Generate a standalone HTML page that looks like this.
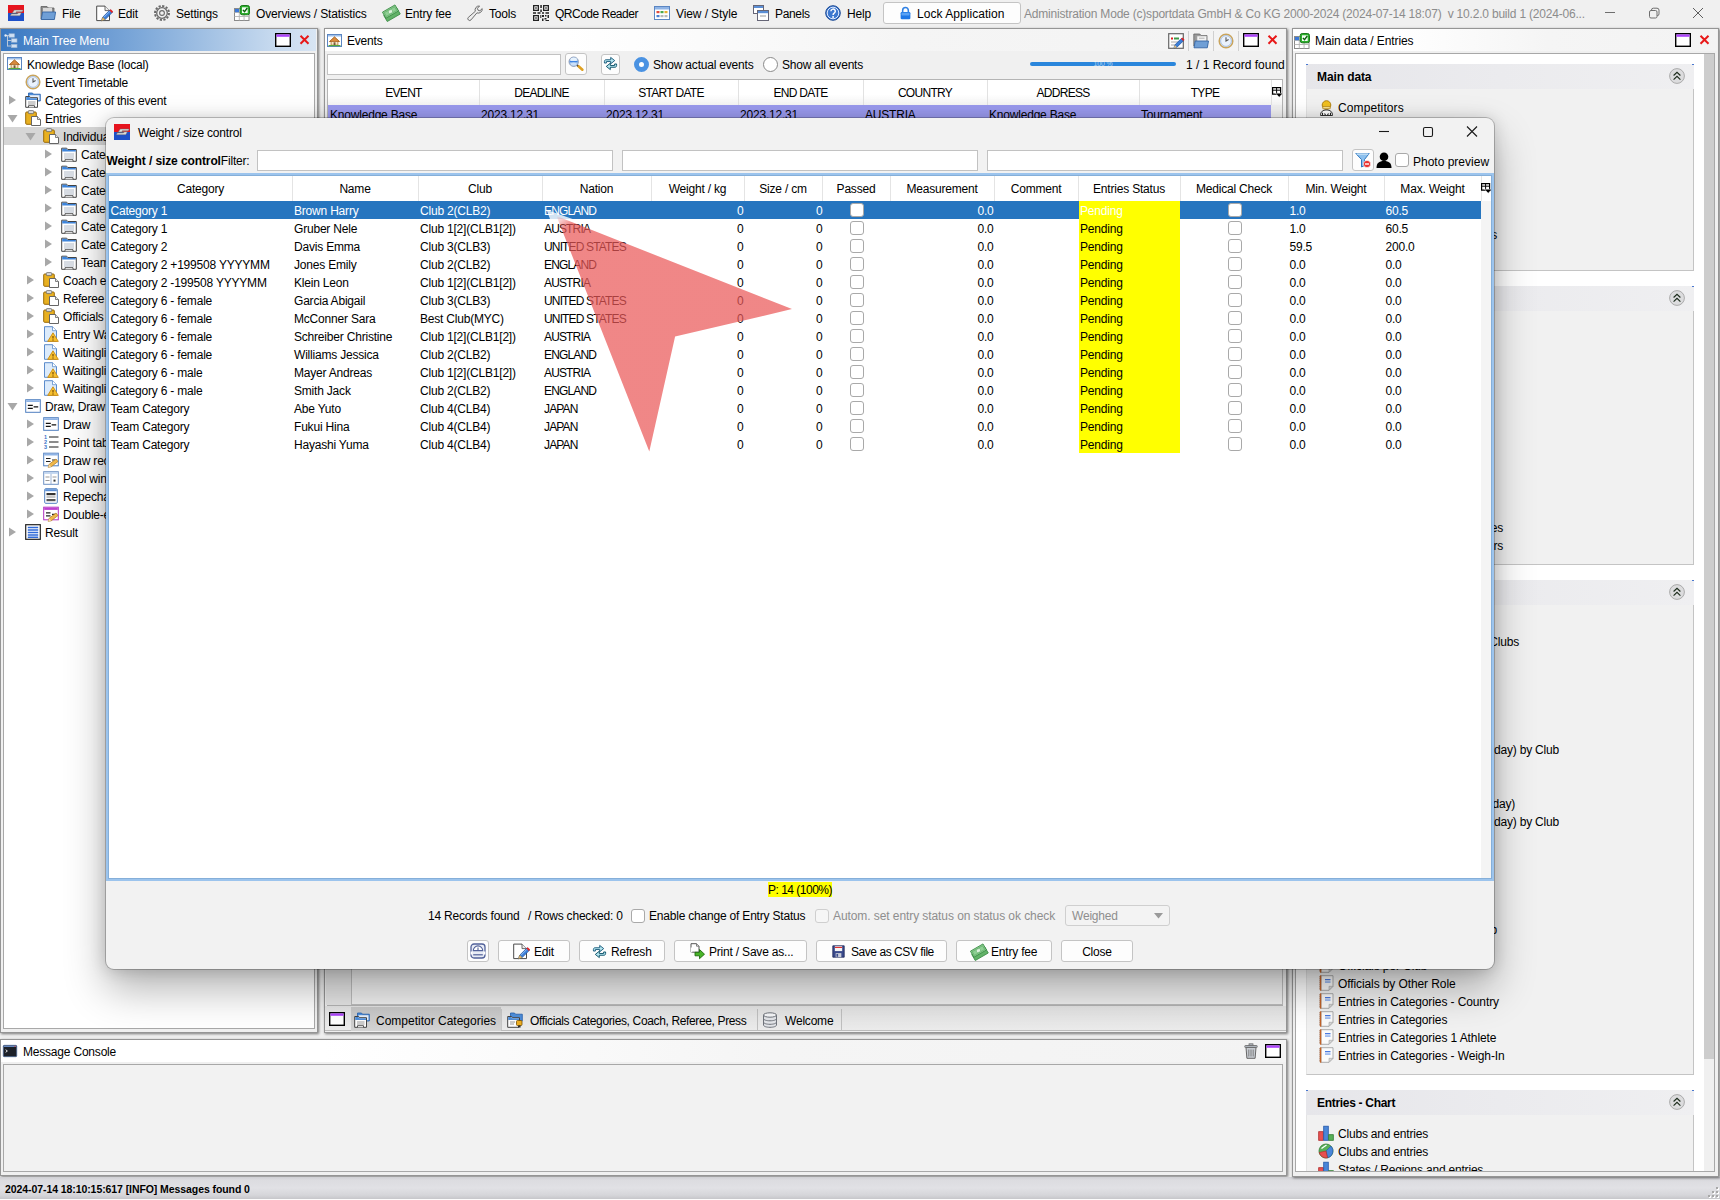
<!DOCTYPE html>
<html lang="en"><head><meta charset="utf-8"><title>Weight / size control</title>
<style>
*{box-sizing:border-box;margin:0;padding:0}
html,body{width:1720px;height:1200px;overflow:hidden;background:#f0f0f0}
body{font-family:"Liberation Sans",sans-serif;font-size:12px;letter-spacing:-0.2px;color:#000;position:relative}
.a{position:absolute}
.t{position:absolute;white-space:pre;line-height:18px;height:18px}
.b{font-weight:bold}
.c{text-align:center}
.r{text-align:right}
.w{color:#fff}
.g{color:#8a8a8a}
svg{position:absolute;overflow:visible}
.btn{position:absolute;height:22px;border:1px solid #c4c4c4;border-radius:3px;background:#fdfdfd}
.cb{position:absolute;width:14px;height:14px;border:1px solid #a9a9a9;border-radius:3px;background:#fff}
.inp{position:absolute;background:#fff;border:1px solid #c2c2c2}
.hd{position:absolute;top:0;height:25px;line-height:27px;text-align:center;border-right:1px solid #e4e4e4;white-space:pre}
.row{position:absolute;left:0;height:18px;line-height:18px;white-space:pre}
.row span{position:absolute;top:0;height:18px;line-height:20px}
</style></head>
<body>
<div class="a" style="left:0px;top:0px;width:1720px;height:28px;background:#f0f0f0"></div>
<svg style="left:8px;top:5px" width="16" height="16" viewBox="0 0 16 16" ><rect x="0" y="0" width="16" height="8" fill="#e6141e"/><rect x="0" y="8" width="16" height="8" fill="#1e50c8"/><path d="M6.200 5h9l-.9 1.800H8.300l-.4.9h5.500l-1.600 3H2.400l.9-1.800h6l.4-.9H4.300z" fill="#dcdcdc" stroke="#6a6a6a" stroke-width=".45"/><path d="M3 8.600h7.500" stroke="#9a6a3a" stroke-width=".5" opacity=".7"/></svg>
<svg style="left:40px;top:5px" width="16" height="16" viewBox="0 0 16 16" ><path d="M1 1.5h6l1.5 1.5H14v11H1z" fill="#8d8d8d" stroke="#5e5e5e" stroke-width=".8"/><path d="M3 3h9v9H3z" fill="#d8d8d8"/><path d="M2.6 7h13l-1.2 7.5H1.2z" fill="#6f9fd6" stroke="#3465a4" stroke-width=".9"/></svg>
<div class="t " style="left:62px;top:4.5px;">File</div>
<svg style="left:96px;top:5px" width="16" height="16" viewBox="0 0 16 16" ><path d="M.7 1.100h8.300l4.500 4.500v10H.7z" fill="#fff" stroke="#4a4a4a" stroke-width="1"/><path d="M9 1.100v4.500h4.500" fill="#ececec" stroke="#4a4a4a" stroke-width=".8"/><path d="M5.500 15.800l1.200-3.600 7.400-7.400 2.400 2.400-7.400 7.400z" fill="#3b7fd9" stroke="#1d4f9c" stroke-width=".7"/><path d="M13.400 5.500l1.300-1.300 2.400 2.400-1.300 1.300z" fill="#e62020"/><path d="M5.500 15.800l1.200-3.600 2.400 2.400z" fill="#f2c879" stroke="#a67a2a" stroke-width=".5"/><path d="M8 12.200l5.800-5.800" stroke="#9cc4f6" stroke-width=".9"/></svg>
<div class="t " style="left:118px;top:4.5px;">Edit</div>
<svg style="left:154px;top:5px" width="16" height="16" viewBox="0 0 16 16" ><g fill="none" stroke="#6a6a6a"><circle cx="8" cy="8" r="5.3" stroke-width="1.3"/><circle cx="8" cy="8" r="2.4" stroke-width="1.1"/><circle cx="8" cy="8" r="7" stroke-width="2" stroke-dasharray="2.2 1.46"/></g></svg>
<div class="t " style="left:176px;top:4.5px;">Settings</div>
<svg style="left:234px;top:5px" width="16" height="16" viewBox="0 0 16 16" ><rect x=".5" y="3.500" width="14.500" height="12" fill="#fff" stroke="#8a8a8a" stroke-width="1"/><path d="M.5 7.500h14.500M.5 11.500h14.500M5.300 3.500v12M10.100 7.500v8" stroke="#b4b4b4" stroke-width=".9"/><rect x="1" y="4" width="4" height="3.200" fill="#3c78d8"/><rect x="6.200" y=".5" width="9.300" height="9.300" rx="2" fill="#2cb02c" stroke="#0e6e0e" stroke-width=".9"/><rect x="8" y="2.300" width="5.700" height="5.700" fill="#f4fff4"/><path d="M8.900 4.900l1.600 1.800 2.800-3.700" fill="none" stroke="#0e5e0e" stroke-width="1.400"/></svg>
<div class="t " style="left:256px;top:4.5px;letter-spacing:-0.15px">Overviews / Statistics</div>
<svg style="left:383px;top:5px" width="16" height="16" viewBox="0 0 16 16" ><g transform="rotate(-30 8 8)"><rect x=".5" y="6.500" width="15" height="7" fill="#62b268" stroke="#3c8c46" stroke-width=".8"/><rect x="1" y="3" width="14.500" height="7" fill="#8fd094" stroke="#3c8c46" stroke-width=".8"/><rect x="2.300" y="4.300" width="11.900" height="4.400" fill="none" stroke="#5aa862" stroke-width=".6"/><ellipse cx="8.200" cy="6.500" rx="2.300" ry="1.800" fill="#dff3df" stroke="#5aa862" stroke-width=".5"/></g></svg>
<div class="t " style="left:405px;top:4.5px;">Entry fee</div>
<svg style="left:467px;top:5px" width="16" height="16" viewBox="0 0 16 16" ><path d="M15.200 3.600a4 4 0 0 1-5.300 4.300L4 14.900a1.800 1.800 0 0 1-2.700-2.500l7-6.100A4 4 0 0 1 12.600 1l-2.200 2.300.6 1.900 1.900.6z" fill="#ececec" stroke="#6e6e6e" stroke-width="1"/></svg>
<div class="t " style="left:489px;top:4.5px;">Tools</div>
<svg style="left:533px;top:5px" width="16" height="16" viewBox="0 0 16 16" ><g fill="#222"><path d="M0 0h6v6H0zM1.3 1.3v3.4h3.4V1.3zM10 0h6v6h-6zM11.3 1.3v3.4h3.4V1.3zM0 10h6v6H0zM1.3 11.3v3.4h3.4v-3.4z" fill-rule="evenodd"/><rect x="2.3" y="2.3" width="1.4" height="1.4"/><rect x="12.3" y="2.3" width="1.4" height="1.4"/><rect x="2.3" y="12.3" width="1.4" height="1.4"/><path d="M7.3 0h1.5v3H7.3zM7.3 4.5h1.5V7H7.3zM0 7.3h3v1.5H0zM4.5 7.3h3v1.5h-3zM9 7.3h2v1.5H9zM12.5 7.3H16v1.5h-3.5zM9 10h2v2H9zM12 10h1.5v1.5H12zM14.5 10H16v3h-1.5zM9 13.5h1.5V16H9zM11.5 13h2v1.5h-2zM12.5 15H16v1h-3.5zM7.3 10h1v3h-1z"/></g></svg>
<div class="t " style="left:555px;top:4.5px;letter-spacing:-0.5px">QRCode Reader</div>
<svg style="left:654px;top:5px" width="16" height="16" viewBox="0 0 16 16" ><rect x=".5" y="1.5" width="15" height="13" fill="#fff" stroke="#5b86c2" stroke-width="1"/><rect x="1" y="2" width="14" height="2.5" fill="#8fb4e6"/><rect x="2.5" y="6" width="3" height="2.2" fill="#e04a3a"/><rect x="6.5" y="6" width="3" height="2.2" fill="#4aa84a"/><rect x="10.5" y="6" width="3" height="2.2" fill="#e8b030"/><rect x="2.5" y="10" width="3" height="2.2" fill="#4a7fd0"/><rect x="6.5" y="10" width="3" height="2.2" fill="#b9b9b9"/><rect x="10.5" y="10" width="3" height="2.2" fill="#b9b9b9"/></svg>
<div class="t " style="left:676px;top:4.5px;letter-spacing:-0.1px">View / Style</div>
<svg style="left:753px;top:5px" width="16" height="16" viewBox="0 0 16 16" ><rect x=".5" y=".5" width="10" height="8" fill="#fff" stroke="#667" stroke-width="1"/><rect x="1" y="1" width="9" height="2" fill="#5b8fd6"/><rect x="4.5" y="5.5" width="11" height="10" fill="#fff" stroke="#667" stroke-width="1"/><rect x="5" y="6" width="10" height="2.2" fill="#5b8fd6"/><path d="M7 11h6" stroke="#999" stroke-width="1"/></svg>
<div class="t " style="left:775px;top:4.5px;letter-spacing:-0.35px">Panels</div>
<svg style="left:825px;top:5px" width="16" height="16" viewBox="0 0 16 16" ><circle cx="8" cy="8" r="7.3" fill="#3d78cf" stroke="#1d4a94" stroke-width="1"/><circle cx="8" cy="8" r="5.8" fill="none" stroke="#dfeaff" stroke-width="1"/><path d="M5.9 6.3a2.2 2.2 0 1 1 3.3 1.9c-.8.5-1.1.9-1.1 1.8" fill="none" stroke="#fff" stroke-width="1.5"/><circle cx="8.1" cy="12" r=".95" fill="#fff"/></svg>
<div class="t " style="left:847px;top:4.5px;">Help</div>
<div class="a" style="left:882.5px;top:2px;width:138.5px;height:22px;border:1px solid #c4c4c4;border-radius:3px;background:#fdfdfd"></div>
<svg style="left:898.5px;top:6px" width="13" height="14" viewBox="0 0 16 16" ><path d="M4.5 7V4.8a3.5 3.5 0 0 1 7 0V7" fill="none" stroke="#2f80e4" stroke-width="1.9"/><rect x="2" y="6.8" width="12" height="9" rx="1.6" fill="#1f78e6"/><rect x="3" y="7.8" width="10" height="3.2" rx="1" fill="#5aa2f4"/></svg>
<div class="t " style="left:917px;top:4.5px;letter-spacing:0.05px">Lock Application</div>
<div class="t g" style="left:1024px;top:4.5px;color:#8c8c8c">Administration Mode (c)sportdata GmbH &amp; Co KG 2000-2024 (2024-07-14 18:07)  v 10.2.0 build 1 (2024-06...</div>
<svg style="left:1600px;top:4px" width="120" height="20" viewBox="0 0 120 20"><g fill="none" stroke="#6e6e6e" stroke-width="1"><path d="M5 8.500h10"/><rect x="49.500" y="6.500" width="7.500" height="7.500" rx="1.500"/><path d="M51.500 6.500v-.500a1.800 1.800 0 0 1 1.800-1.800h3.700a2 2 0 0 1 2 2v3.700a1.800 1.800 0 0 1-1.800 1.800h-.2"/><path d="M93 4l10 10M103 4l-10 10" stroke="#5e5e5e" stroke-width="1"/></g></svg>
<div class="a" style="left:0px;top:28px;width:318px;height:1005px;border:1px solid #959595;box-shadow:1px 1px 2.5px rgba(0,0,0,.5);background:#f0f0f0"></div>
<div class="a" style="left:1px;top:29px;width:315px;height:22px;background:linear-gradient(90deg,#3878c2 0%,#5a8ecc 20%,#7aa6d8 42%,#9cbde2 62%,#c4d8ee 85%,#d8e5f3 100%)"></div>
<svg style="left:4px;top:33px" width="16" height="16" viewBox="0 0 16 16" ><path d="M3.5 3v10.5M3.5 7.5H8M3.5 13H8M1 2.5h5" stroke="#b9c7d8" stroke-width="1" fill="none"/><rect x="5" y=".8" width="5.5" height="3.4" fill="#cfe0f4" stroke="#9db4d0" stroke-width=".6"/><rect x="7.5" y="5.8" width="5.5" height="3.4" fill="#cfe0f4" stroke="#9db4d0" stroke-width=".6"/><rect x="7.5" y="11.3" width="5.5" height="3.4" fill="#cfe0f4" stroke="#9db4d0" stroke-width=".6"/><circle cx="1.6" cy="2.5" r="1.2" fill="#e8eef6"/></svg>
<div class="t w" style="left:23px;top:32px;letter-spacing:-0.05px">Main Tree Menu</div>
<svg style="left:275px;top:33px" width="16" height="16" viewBox="0 0 16 16" ><rect x=".7" y=".7" width="14.600" height="12.600" fill="#fff" stroke="#000" stroke-width="1.400"/><rect x="1.400" y="1.400" width="13.200" height="2.400" fill="#ac44fa"/></svg>
<svg style="left:297px;top:33px" width="16" height="16" viewBox="0 0 16 16" ><path d="M3.500 2.700l8 8M11.500 2.700l-8 8" stroke="#e81818" stroke-width="2" fill="none"/></svg>
<div class="a" style="left:3px;top:53px;width:312px;height:976px;border:1px solid #a8a8a8;background:#fff"></div>
<svg style="left:7px;top:56px" width="16" height="16" viewBox="0 0 16 16" ><rect x=".5" y="1.500" width="14" height="12" fill="#fff" stroke="#5b86c2" stroke-width="1"/><rect x="1" y="2" width="13" height="1.500" fill="#9fc0ea"/><path d="M7.500 4L2.600 8.500h1.500v3.700h6.800V8.500h1.500z" fill="#f6e7c8" stroke="#b0762a" stroke-width=".8"/><path d="M7.500 4L2.600 8.500h9.800z" fill="#d98a3c" stroke="#a35a18" stroke-width=".7"/><rect x="6.600" y="9.300" width="1.900" height="2.900" fill="#7a5a3a"/><path d="M1.500 12.600h12" stroke="#58a83c" stroke-width="1.200"/></svg>
<div class="t " style="left:27px;top:56px;">Knowledge Base (local)</div>
<svg style="left:25px;top:74px" width="16" height="16" viewBox="0 0 16 16" ><circle cx="8" cy="8" r="6.8" fill="#f2f7ff" stroke="#c9a45c" stroke-width="1.5"/><circle cx="8" cy="8" r="5.4" fill="#eaf2fd" stroke="#9fb9dd" stroke-width=".9"/><path d="M8 4.2V8l2.6-1.4" stroke="#555" stroke-width="1.1" fill="none"/></svg>
<div class="t " style="left:45px;top:74px;">Event Timetable</div>
<svg style="left:8px;top:95px" width="9" height="10" viewBox="0 0 9 10"><path d="M1 .500l7 4.500-7 4.500z" fill="#a8a8a8"/></svg>
<svg style="left:25px;top:92px" width="16" height="16" viewBox="0 0 16 16" ><path d="M3.5 1h4l1 1.2h6.8V9H3.5z" fill="#4f8fdc" stroke="#2460ad" stroke-width=".8"/><rect x="4.5" y="3.2" width="10" height="5" fill="#e9f1fb"/><path d="M.7 4.5h4l1 1.2h6.8v9.6H.7z" fill="#fff" stroke="#444" stroke-width="1"/><path d="M1.2 5h3.2l1 1.2h6.6V8H1.2z" fill="#4f8fdc"/><path d="M3 10h7.5M3 12h7.5" stroke="#9a9a9a" stroke-width="1"/><path d="M3.5 15.3v-1.6h6v1.6" fill="#fff" stroke="#444" stroke-width=".9"/></svg>
<div class="t " style="left:45px;top:92px;">Categories of this event</div>
<svg style="left:7px;top:114px" width="11" height="9" viewBox="0 0 11 9"><path d="M.500 1h10l-5 7.500z" fill="#a8a8a8"/></svg>
<svg style="left:25px;top:110px" width="16" height="16" viewBox="0 0 16 16" ><rect x=".7" y="2" width="10.6" height="12.3" rx="1" fill="#e8b020" stroke="#9a6a08" stroke-width="1"/><rect x="3.3" y=".6" width="5.4" height="3" rx=".8" fill="#d9d9d9" stroke="#6a6a6a" stroke-width=".8"/><path d="M6.5 6.5h6l3 3v6h-9z" fill="#fff" stroke="#666" stroke-width="1"/><path d="M12.5 6.5v3h3" fill="#e6e6e6" stroke="#666" stroke-width=".8"/></svg>
<div class="t " style="left:45px;top:110px;">Entries</div>
<div class="a" style="left:4px;top:127px;width:310px;height:18px;background:#d6d6d6"></div>
<svg style="left:25px;top:132px" width="11" height="9" viewBox="0 0 11 9"><path d="M.500 1h10l-5 7.500z" fill="#a8a8a8"/></svg>
<svg style="left:43px;top:128px" width="16" height="16" viewBox="0 0 16 16" ><rect x=".7" y="2" width="10.6" height="12.3" rx="1" fill="#e8b020" stroke="#9a6a08" stroke-width="1"/><rect x="3.3" y=".6" width="5.4" height="3" rx=".8" fill="#d9d9d9" stroke="#6a6a6a" stroke-width=".8"/><path d="M6.5 6.5h6l3 3v6h-9z" fill="#fff" stroke="#666" stroke-width="1"/><path d="M12.5 6.5v3h3" fill="#e6e6e6" stroke="#666" stroke-width=".8"/></svg>
<div class="t " style="left:63px;top:128px;">Individual entries</div>
<svg style="left:44px;top:149px" width="9" height="10" viewBox="0 0 9 10"><path d="M1 .500l7 4.500-7 4.500z" fill="#a8a8a8"/></svg>
<svg style="left:61px;top:146px" width="16" height="16" viewBox="0 0 16 16" ><path d="M.7 2.200h5l1 1.300h8.600v11.800H.7z" fill="#fff" stroke="#444" stroke-width="1"/><path d="M1.200 2.700h4.200l1 1.300h8.400v1.500H1.200z" fill="#3f86dc"/><path d="M3 8h10M3 10h10M3 12h10" stroke="#a9b4c4" stroke-width=".9"/><path d="M4 15.300v-1.600h8v1.600" fill="#fff" stroke="#444" stroke-width=".9"/></svg>
<div class="t " style="left:81px;top:146px;">Category 1</div>
<svg style="left:44px;top:167px" width="9" height="10" viewBox="0 0 9 10"><path d="M1 .500l7 4.500-7 4.500z" fill="#a8a8a8"/></svg>
<svg style="left:61px;top:164px" width="16" height="16" viewBox="0 0 16 16" ><path d="M.7 2.200h5l1 1.300h8.600v11.800H.7z" fill="#fff" stroke="#444" stroke-width="1"/><path d="M1.200 2.700h4.200l1 1.300h8.400v1.500H1.200z" fill="#3f86dc"/><path d="M3 8h10M3 10h10M3 12h10" stroke="#a9b4c4" stroke-width=".9"/><path d="M4 15.300v-1.600h8v1.600" fill="#fff" stroke="#444" stroke-width=".9"/></svg>
<div class="t " style="left:81px;top:164px;">Category 2</div>
<svg style="left:44px;top:185px" width="9" height="10" viewBox="0 0 9 10"><path d="M1 .500l7 4.500-7 4.500z" fill="#a8a8a8"/></svg>
<svg style="left:61px;top:182px" width="16" height="16" viewBox="0 0 16 16" ><path d="M.7 2.200h5l1 1.300h8.600v11.800H.7z" fill="#fff" stroke="#444" stroke-width="1"/><path d="M1.200 2.700h4.200l1 1.300h8.400v1.500H1.200z" fill="#3f86dc"/><path d="M3 8h10M3 10h10M3 12h10" stroke="#a9b4c4" stroke-width=".9"/><path d="M4 15.300v-1.600h8v1.600" fill="#fff" stroke="#444" stroke-width=".9"/></svg>
<div class="t " style="left:81px;top:182px;">Category 2 +199508</div>
<svg style="left:44px;top:203px" width="9" height="10" viewBox="0 0 9 10"><path d="M1 .500l7 4.500-7 4.500z" fill="#a8a8a8"/></svg>
<svg style="left:61px;top:200px" width="16" height="16" viewBox="0 0 16 16" ><path d="M.7 2.200h5l1 1.300h8.600v11.800H.7z" fill="#fff" stroke="#444" stroke-width="1"/><path d="M1.200 2.700h4.200l1 1.300h8.400v1.500H1.200z" fill="#3f86dc"/><path d="M3 8h10M3 10h10M3 12h10" stroke="#a9b4c4" stroke-width=".9"/><path d="M4 15.300v-1.600h8v1.600" fill="#fff" stroke="#444" stroke-width=".9"/></svg>
<div class="t " style="left:81px;top:200px;">Category 2 -199508</div>
<svg style="left:44px;top:221px" width="9" height="10" viewBox="0 0 9 10"><path d="M1 .500l7 4.500-7 4.500z" fill="#a8a8a8"/></svg>
<svg style="left:61px;top:218px" width="16" height="16" viewBox="0 0 16 16" ><path d="M.7 2.200h5l1 1.300h8.600v11.800H.7z" fill="#fff" stroke="#444" stroke-width="1"/><path d="M1.200 2.700h4.200l1 1.300h8.400v1.500H1.200z" fill="#3f86dc"/><path d="M3 8h10M3 10h10M3 12h10" stroke="#a9b4c4" stroke-width=".9"/><path d="M4 15.300v-1.600h8v1.600" fill="#fff" stroke="#444" stroke-width=".9"/></svg>
<div class="t " style="left:81px;top:218px;">Category 6 - female</div>
<svg style="left:44px;top:239px" width="9" height="10" viewBox="0 0 9 10"><path d="M1 .500l7 4.500-7 4.500z" fill="#a8a8a8"/></svg>
<svg style="left:61px;top:236px" width="16" height="16" viewBox="0 0 16 16" ><path d="M.7 2.200h5l1 1.300h8.600v11.800H.7z" fill="#fff" stroke="#444" stroke-width="1"/><path d="M1.200 2.700h4.200l1 1.300h8.400v1.500H1.200z" fill="#3f86dc"/><path d="M3 8h10M3 10h10M3 12h10" stroke="#a9b4c4" stroke-width=".9"/><path d="M4 15.300v-1.600h8v1.600" fill="#fff" stroke="#444" stroke-width=".9"/></svg>
<div class="t " style="left:81px;top:236px;">Category 6 - male</div>
<svg style="left:44px;top:257px" width="9" height="10" viewBox="0 0 9 10"><path d="M1 .500l7 4.500-7 4.500z" fill="#a8a8a8"/></svg>
<svg style="left:61px;top:254px" width="16" height="16" viewBox="0 0 16 16" ><path d="M.7 2.200h5l1 1.300h8.600v11.800H.7z" fill="#fff" stroke="#444" stroke-width="1"/><path d="M1.200 2.700h4.200l1 1.300h8.400v1.500H1.200z" fill="#3f86dc"/><path d="M3 8h10M3 10h10M3 12h10" stroke="#a9b4c4" stroke-width=".9"/><path d="M4 15.300v-1.600h8v1.600" fill="#fff" stroke="#444" stroke-width=".9"/></svg>
<div class="t " style="left:81px;top:254px;">Team Category</div>
<svg style="left:26px;top:275px" width="9" height="10" viewBox="0 0 9 10"><path d="M1 .500l7 4.500-7 4.500z" fill="#a8a8a8"/></svg>
<svg style="left:43px;top:272px" width="16" height="16" viewBox="0 0 16 16" ><rect x=".7" y="2" width="10.6" height="12.3" rx="1" fill="#e8b020" stroke="#9a6a08" stroke-width="1"/><rect x="3.3" y=".6" width="5.4" height="3" rx=".8" fill="#d9d9d9" stroke="#6a6a6a" stroke-width=".8"/><path d="M6.5 6.5h6l3 3v6h-9z" fill="#fff" stroke="#666" stroke-width="1"/><path d="M12.5 6.5v3h3" fill="#e6e6e6" stroke="#666" stroke-width=".8"/></svg>
<div class="t " style="left:63px;top:272px;">Coach entries</div>
<svg style="left:26px;top:293px" width="9" height="10" viewBox="0 0 9 10"><path d="M1 .500l7 4.500-7 4.500z" fill="#a8a8a8"/></svg>
<svg style="left:43px;top:290px" width="16" height="16" viewBox="0 0 16 16" ><rect x=".7" y="2" width="10.6" height="12.3" rx="1" fill="#e8b020" stroke="#9a6a08" stroke-width="1"/><rect x="3.3" y=".6" width="5.4" height="3" rx=".8" fill="#d9d9d9" stroke="#6a6a6a" stroke-width=".8"/><path d="M6.5 6.5h6l3 3v6h-9z" fill="#fff" stroke="#666" stroke-width="1"/><path d="M12.5 6.5v3h3" fill="#e6e6e6" stroke="#666" stroke-width=".8"/></svg>
<div class="t " style="left:63px;top:290px;">Referee entries</div>
<svg style="left:26px;top:311px" width="9" height="10" viewBox="0 0 9 10"><path d="M1 .500l7 4.500-7 4.500z" fill="#a8a8a8"/></svg>
<svg style="left:43px;top:308px" width="16" height="16" viewBox="0 0 16 16" ><rect x=".7" y="2" width="10.6" height="12.3" rx="1" fill="#e8b020" stroke="#9a6a08" stroke-width="1"/><rect x="3.3" y=".6" width="5.4" height="3" rx=".8" fill="#d9d9d9" stroke="#6a6a6a" stroke-width=".8"/><path d="M6.5 6.5h6l3 3v6h-9z" fill="#fff" stroke="#666" stroke-width="1"/><path d="M12.5 6.5v3h3" fill="#e6e6e6" stroke="#666" stroke-width=".8"/></svg>
<div class="t " style="left:63px;top:308px;">Officials entries</div>
<svg style="left:26px;top:329px" width="9" height="10" viewBox="0 0 9 10"><path d="M1 .500l7 4.500-7 4.500z" fill="#a8a8a8"/></svg>
<svg style="left:43px;top:326px" width="16" height="16" viewBox="0 0 16 16" ><path d="M1.5.7h8l4 4v10.6h-12z" fill="#dcebfb" stroke="#5b8ccc" stroke-width="1"/><path d="M9.5.7v4h4" fill="#fff" stroke="#5b8ccc" stroke-width=".8"/><path d="M10 6.8l5.3 8.6H4.7z" fill="#f6c030" stroke="#c98a10" stroke-width=".9"/><path d="M10 10v2.6" stroke="#7a4a00" stroke-width="1.2"/><circle cx="10" cy="14" r=".7" fill="#7a4a00"/></svg>
<div class="t " style="left:63px;top:326px;">Entry Warnings</div>
<svg style="left:26px;top:347px" width="9" height="10" viewBox="0 0 9 10"><path d="M1 .500l7 4.500-7 4.500z" fill="#a8a8a8"/></svg>
<svg style="left:43px;top:344px" width="16" height="16" viewBox="0 0 16 16" ><path d="M1.5.7h8l4 4v10.6h-12z" fill="#dcebfb" stroke="#5b8ccc" stroke-width="1"/><path d="M9.5.7v4h4" fill="#fff" stroke="#5b8ccc" stroke-width=".8"/><path d="M10 6.8l5.3 8.6H4.7z" fill="#f6c030" stroke="#c98a10" stroke-width=".9"/><path d="M10 10v2.6" stroke="#7a4a00" stroke-width="1.2"/><circle cx="10" cy="14" r=".7" fill="#7a4a00"/></svg>
<div class="t " style="left:63px;top:344px;">Waitinglist</div>
<svg style="left:26px;top:365px" width="9" height="10" viewBox="0 0 9 10"><path d="M1 .500l7 4.500-7 4.500z" fill="#a8a8a8"/></svg>
<svg style="left:43px;top:362px" width="16" height="16" viewBox="0 0 16 16" ><path d="M1.5.7h8l4 4v10.6h-12z" fill="#dcebfb" stroke="#5b8ccc" stroke-width="1"/><path d="M9.5.7v4h4" fill="#fff" stroke="#5b8ccc" stroke-width=".8"/><path d="M10 6.8l5.3 8.6H4.7z" fill="#f6c030" stroke="#c98a10" stroke-width=".9"/><path d="M10 10v2.6" stroke="#7a4a00" stroke-width="1.2"/><circle cx="10" cy="14" r=".7" fill="#7a4a00"/></svg>
<div class="t " style="left:63px;top:362px;">Waitinglist Coach</div>
<svg style="left:26px;top:383px" width="9" height="10" viewBox="0 0 9 10"><path d="M1 .500l7 4.500-7 4.500z" fill="#a8a8a8"/></svg>
<svg style="left:43px;top:380px" width="16" height="16" viewBox="0 0 16 16" ><path d="M1.5.7h8l4 4v10.6h-12z" fill="#dcebfb" stroke="#5b8ccc" stroke-width="1"/><path d="M9.5.7v4h4" fill="#fff" stroke="#5b8ccc" stroke-width=".8"/><path d="M10 6.8l5.3 8.6H4.7z" fill="#f6c030" stroke="#c98a10" stroke-width=".9"/><path d="M10 10v2.6" stroke="#7a4a00" stroke-width="1.2"/><circle cx="10" cy="14" r=".7" fill="#7a4a00"/></svg>
<div class="t " style="left:63px;top:380px;">Waitinglist Referee</div>
<svg style="left:7px;top:402px" width="11" height="9" viewBox="0 0 11 9"><path d="M.500 1h10l-5 7.500z" fill="#a8a8a8"/></svg>
<svg style="left:25px;top:398px" width="16" height="16" viewBox="0 0 16 16" ><rect x=".7" y="1.7" width="14.6" height="12.6" fill="#fff" stroke="#4f7fc0" stroke-width="1"/><rect x="1.2" y="2.2" width="13.6" height="1.8" fill="#8fb4e6"/><path d="M2.800 7.300h5M2.800 10.300h5M8.600 8.800h4.600" stroke="#111" stroke-width="1.150"/></svg>
<div class="t " style="left:45px;top:398px;">Draw, Draw records</div>
<svg style="left:26px;top:419px" width="9" height="10" viewBox="0 0 9 10"><path d="M1 .500l7 4.500-7 4.500z" fill="#a8a8a8"/></svg>
<svg style="left:43px;top:416px" width="16" height="16" viewBox="0 0 16 16" ><rect x=".7" y="1.7" width="14.6" height="12.6" fill="#fff" stroke="#4f7fc0" stroke-width="1"/><rect x="1.2" y="2.2" width="13.6" height="1.8" fill="#8fb4e6"/><path d="M2.800 7.300h5M2.800 10.300h5M8.600 8.800h4.600" stroke="#111" stroke-width="1.150"/></svg>
<div class="t " style="left:63px;top:416px;">Draw</div>
<svg style="left:26px;top:437px" width="9" height="10" viewBox="0 0 9 10"><path d="M1 .500l7 4.500-7 4.500z" fill="#a8a8a8"/></svg>
<svg style="left:43px;top:434px" width="16" height="16" viewBox="0 0 16 16" ><path d="M6 3h9.500M6 8h9.500M6 13h9.500" stroke="#1a1a1a" stroke-width="1.050"/><g fill="#3b74c8" font-family="Liberation Sans,sans-serif" font-size="5.5" font-weight="bold"><text x="1" y="4.8">1</text><text x="1" y="9.8">2</text><text x="1" y="14.8">3</text></g></svg>
<div class="t " style="left:63px;top:434px;">Point tables</div>
<svg style="left:26px;top:455px" width="9" height="10" viewBox="0 0 9 10"><path d="M1 .500l7 4.500-7 4.500z" fill="#a8a8a8"/></svg>
<svg style="left:43px;top:452px" width="16" height="16" viewBox="0 0 16 16" ><rect x=".7" y="1.2" width="14.6" height="12.6" fill="#fff" stroke="#4f7fc0" stroke-width="1"/><rect x="1.2" y="1.7" width="13.6" height="1.8" fill="#8fb4e6"/><path d="M3 6.5h4.5M3 9.5h4.5M9 8h3" stroke="#222" stroke-width="1.2"/><path d="M5.2 15.3l1-3 6.8-5.3 2 2.5-6.8 5.3z" fill="#f0b84a" stroke="#a8741c" stroke-width=".7"/><path d="M5.2 15.3l1-3 1.9 2.4z" fill="#f6dcae"/></svg>
<div class="t " style="left:63px;top:452px;">Draw records</div>
<svg style="left:26px;top:473px" width="9" height="10" viewBox="0 0 9 10"><path d="M1 .500l7 4.500-7 4.500z" fill="#a8a8a8"/></svg>
<svg style="left:43px;top:470px" width="16" height="16" viewBox="0 0 16 16" ><rect x=".7" y="1.7" width="14.6" height="12.6" fill="#fff" stroke="#6f92c4" stroke-width="1"/><rect x="1.2" y="2.2" width="13.6" height="1.6" fill="#b9d0ee"/><path d="M8 3.8v10.4" stroke="#9fb4d4" stroke-width="1"/><path d="M2.5 7h4M2.5 10.5h4M9.5 7h4" stroke="#9a9a9a" stroke-width="1.2"/><rect x="10.5" y="9.6" width="2" height="2" fill="#333"/></svg>
<div class="t " style="left:63px;top:470px;">Pool winner</div>
<svg style="left:26px;top:491px" width="9" height="10" viewBox="0 0 9 10"><path d="M1 .500l7 4.500-7 4.500z" fill="#a8a8a8"/></svg>
<svg style="left:43px;top:488px" width="16" height="16" viewBox="0 0 16 16" ><rect x="1.7" y=".7" width="12.6" height="14.6" rx="1" fill="#fff" stroke="#4f7fc0" stroke-width="1"/><rect x="2.2" y="1.2" width="11.6" height="2" fill="#5b8fd6"/><rect x="3.5" y="5" width="9" height="2.2" fill="#333"/><rect x="3.5" y="8.2" width="9" height="1.6" fill="#b9b9b9"/><rect x="3.5" y="11" width="9" height="2.2" fill="#555"/></svg>
<div class="t " style="left:63px;top:488px;">Repechage</div>
<svg style="left:26px;top:509px" width="9" height="10" viewBox="0 0 9 10"><path d="M1 .500l7 4.500-7 4.500z" fill="#a8a8a8"/></svg>
<svg style="left:43px;top:506px" width="16" height="16" viewBox="0 0 16 16" ><rect x=".7" y="1.2" width="14.6" height="12.6" fill="#fff" stroke="#b030c0" stroke-width="1"/><rect x="1.2" y="1.7" width="13.6" height="2.2" fill="#c040d0"/><path d="M3 6.8h4.5M3 9.8h4.5M9 8.3h3" stroke="#222" stroke-width="1.2"/><path d="M5.2 15.3l1-3 6.8-5.3 2 2.5-6.8 5.3z" fill="#f0b84a" stroke="#a8741c" stroke-width=".7"/><path d="M5.2 15.3l1-3 1.9 2.4z" fill="#f6dcae"/></svg>
<div class="t " style="left:63px;top:506px;">Double-elimination</div>
<svg style="left:8px;top:527px" width="9" height="10" viewBox="0 0 9 10"><path d="M1 .500l7 4.500-7 4.500z" fill="#a8a8a8"/></svg>
<svg style="left:25px;top:524px" width="16" height="16" viewBox="0 0 16 16" ><rect x=".7" y=".7" width="14.6" height="14.6" fill="#fff" stroke="#222" stroke-width="1.2"/><path d="M2.8 3.5h10.4M2.8 6h10.4M2.8 8.5h10.4M2.8 11h10.4M2.8 13.2h10.4" stroke="#2f6ad8" stroke-width="1.5"/></svg>
<div class="t " style="left:45px;top:524px;">Result</div>
<div class="a" style="left:324px;top:28px;width:963px;height:1005px;border:1px solid #959595;box-shadow:1px 1px 2.5px rgba(0,0,0,.5);background:#f0f0f0"></div>
<div class="a" style="left:325px;top:29px;width:960px;height:22px;background:linear-gradient(90deg,#fff 0%,#fff 25%,#f5f5f5 60%,#f3f3f3 100%)"></div>
<svg style="left:327px;top:33px" width="16" height="16" viewBox="0 0 16 16" ><rect x=".5" y="1.500" width="14" height="12" fill="#fff" stroke="#5b86c2" stroke-width="1"/><rect x="1" y="2" width="13" height="1.500" fill="#9fc0ea"/><path d="M7.500 4L2.600 8.500h1.500v3.700h6.800V8.500h1.500z" fill="#f6e7c8" stroke="#b0762a" stroke-width=".8"/><path d="M7.500 4L2.600 8.500h9.800z" fill="#d98a3c" stroke="#a35a18" stroke-width=".7"/><rect x="6.600" y="9.300" width="1.900" height="2.900" fill="#7a5a3a"/><path d="M1.500 12.600h12" stroke="#58a83c" stroke-width="1.200"/></svg>
<div class="t " style="left:347px;top:32px;">Events</div>
<svg style="left:1168px;top:33px" width="16" height="16" viewBox="0 0 16 16" ><rect x=".7" y=".7" width="14.6" height="14.6" fill="#fff" stroke="#666" stroke-width="1.2"/><rect x="3" y="4.5" width="2" height="2" fill="#e02020"/><rect x="6" y="4.5" width="5" height="2" fill="#3f9a4a"/><path d="M3 9h8M3 12h5" stroke="#aaa" stroke-width="1.2"/><path d="M6 15l.8-3 6.500-6.500 2.200 2.200L9 14.200z" fill="#3b7fd9" stroke="#1d4f9c" stroke-width=".7"/><path d="M13 5.800l1.300-1.300 2.200 2.200-1.300 1.300z" fill="#e02020"/><path d="M6 15l.8-3 2.200 2.200z" fill="#f2c879"/></svg>
<svg style="left:1193px;top:33px" width="16" height="16" viewBox="0 0 16 16" ><path d="M.8 1h6l1.200 1.500h6V13H.8z" fill="#9a9a9a" stroke="#666" stroke-width=".8"/><rect x="4" y="3" width="9.500" height="8" fill="#f4f4f4" stroke="#aaa" stroke-width=".6"/><path d="M6 5.200h5.500" stroke="#aaa" stroke-width=".9"/><path d="M2.200 8h13.300l-1.200 6.800H1z" fill="#6f9fd6" stroke="#3465a4" stroke-width=".9"/></svg>
<svg style="left:1218px;top:33px" width="16" height="16" viewBox="0 0 16 16" ><circle cx="8" cy="8" r="6.8" fill="#f2f7ff" stroke="#c9a45c" stroke-width="1.5"/><circle cx="8" cy="8" r="5.4" fill="#eaf2fd" stroke="#9fb9dd" stroke-width=".9"/><path d="M8 4.2V8l2.6-1.4" stroke="#555" stroke-width="1.1" fill="none"/></svg>
<svg style="left:1243px;top:33px" width="16" height="16" viewBox="0 0 16 16" ><rect x=".7" y=".7" width="14.600" height="12.600" fill="#fff" stroke="#000" stroke-width="1.400"/><rect x="1.400" y="1.400" width="13.200" height="2.400" fill="#ac44fa"/></svg>
<svg style="left:1265px;top:33px" width="16" height="16" viewBox="0 0 16 16" ><path d="M3.500 2.700l8 8M11.500 2.700l-8 8" stroke="#e81818" stroke-width="2" fill="none"/></svg>
<div class="a" style="left:1188px;top:31px;width:1px;height:20px;background:#d0d0d0"></div>
<div class="a" style="left:1213px;top:31px;width:1px;height:20px;background:#d0d0d0"></div>
<div class="a" style="left:1238px;top:31px;width:1px;height:20px;background:#d0d0d0"></div>
<div class="inp" style="left:327px;top:54px;width:234px;height:21px;"></div>
<div class="btn" style="left:565px;top:53px;width:22px;height:22px;"></div>
<svg style="left:568px;top:56px" width="16" height="16" viewBox="0 0 16 16" ><circle cx="5.700" cy="5.700" r="4.700" fill="#a4c8f2" stroke="#7c8aa6" stroke-width=".8"/><ellipse cx="5.700" cy="3.700" rx="3.300" ry="2.100" fill="#e6f2fd"/><path d="M1.800 5.600h7.800" stroke="#3c84e4" stroke-width="1.300"/><ellipse cx="5.700" cy="8" rx="3" ry="1.600" fill="#d4e6fa" opacity=".8"/><path d="M9.200 9.200l1.200 1.100" stroke="#333" stroke-width="2"/><path d="M10.800 10.500l3.600 3.200" stroke="#dfa020" stroke-width="2.600" stroke-linecap="round"/></svg>
<div class="btn" style="left:601px;top:54px;width:19px;height:21px;"></div>
<svg style="left:603px;top:56px" width="15" height="15" viewBox="0 0 16 16" ><path d="M1.500 7.500V5.800c0-1.100.7-1.800 1.800-1.800h4.900V1.500l4.300 3.400-4.300 3.400V5.900H3.600v1.600z" fill="#b4e6f0" stroke="#1c5c7c" stroke-width="1"/><path d="M14.500 8.500v1.700c0 1.100-.7 1.800-1.800 1.800H7.800v2.500L3.500 11.100l4.300-3.400v2.400h4.600V8.500z" fill="#b4e6f0" stroke="#0c5068" stroke-width="1"/></svg>
<div class="a" style="left:634px;top:57px;width:15px;height:15px;border-radius:50%;border:5px solid #4a92e2;background:#fff"></div>
<div class="t " style="left:653px;top:56px;">Show actual events</div>
<div class="a" style="left:763px;top:57px;width:15px;height:15px;border-radius:50%;border:1px solid #8a8a8a;background:#fff"></div>
<div class="t " style="left:782px;top:56px;">Show all events</div>
<div class="a" style="left:1030px;top:62px;width:146px;height:4px;background:#2a86dc;border-radius:2px"></div>
<div class="t w c" style="left:1088px;top:54.5px;font-size:7px;line-height:8px;height:8px;top:59.500px;width:30px;opacity:.6">100 %</div>
<div class="t " style="left:1186px;top:56px;letter-spacing:0">1 / 1 Record found</div>
<div class="a" style="left:327px;top:79px;width:956px;height:927px;border:1px solid #b4b4b4;background:#f0f0f0"></div>
<div class="a" style="left:328px;top:80px;width:954px;height:25px;background:linear-gradient(#fff,#fff 60%,#f4f4f4)"></div>
<div class="t c" style="left:328px;top:84px;width:151px;letter-spacing:-0.7px">EVENT</div>
<div class="a" style="left:479px;top:80px;width:1px;height:25px;background:#e2e2e2"></div>
<div class="t c" style="left:479px;top:84px;width:125px;letter-spacing:-0.7px">DEADLINE</div>
<div class="a" style="left:604px;top:80px;width:1px;height:25px;background:#e2e2e2"></div>
<div class="t c" style="left:604px;top:84px;width:134px;letter-spacing:-0.7px">START DATE</div>
<div class="a" style="left:738px;top:80px;width:1px;height:25px;background:#e2e2e2"></div>
<div class="t c" style="left:738px;top:84px;width:125px;letter-spacing:-0.7px">END DATE</div>
<div class="a" style="left:863px;top:80px;width:1px;height:25px;background:#e2e2e2"></div>
<div class="t c" style="left:863px;top:84px;width:124px;letter-spacing:-0.7px">COUNTRY</div>
<div class="a" style="left:987px;top:80px;width:1px;height:25px;background:#e2e2e2"></div>
<div class="t c" style="left:987px;top:84px;width:152px;letter-spacing:-0.7px">ADDRESS</div>
<div class="a" style="left:1139px;top:80px;width:1px;height:25px;background:#e2e2e2"></div>
<div class="t c" style="left:1139px;top:84px;width:132px;letter-spacing:-0.7px">TYPE</div>
<div class="a" style="left:1271px;top:80px;width:1px;height:25px;background:#e2e2e2"></div>
<svg style="left:1272px;top:87px" width="11" height="11" viewBox="0 0 11 11"><path d="M.600 .600h8v6.500h-8z" fill="#fff" stroke="#000" stroke-width="1.200"/><path d="M.600 3.200h8M4.600 .600v6.500" stroke="#000" stroke-width="1"/><path d="M3.600 6.300h7.200L7.200 10.300z" fill="#000" stroke="#fff" stroke-width=".5"/></svg>
<div class="a" style="left:328px;top:105px;width:943px;height:18px;background:#9a9aee"></div>
<div class="t " style="left:330px;top:105.5px;">Knowledge Base</div>
<div class="t " style="left:481px;top:105.5px;">2023.12.31</div>
<div class="t " style="left:606px;top:105.5px;">2023.12.31</div>
<div class="t " style="left:740px;top:105.5px;">2023.12.31</div>
<div class="t " style="left:865px;top:105.5px;">AUSTRIA</div>
<div class="t " style="left:989px;top:105.5px;">Knowledge Base</div>
<div class="t " style="left:1141px;top:105.5px;">Tournament</div>
<div class="a" style="left:326px;top:968px;width:25px;height:37px;background:#e6e6e6"></div>
<div class="a" style="left:351px;top:968px;width:932px;height:37px;border:1px solid #bcbcbc;border-top:none;background:#f0f0f0"></div>
<div class="a" style="left:325px;top:1006px;width:961px;height:25px;background:linear-gradient(#e4e4e4,#ececec)"></div>
<div class="a" style="left:325px;top:1030px;width:961px;height:1px;background:#bdbdbd"></div>
<svg style="left:329px;top:1012px" width="16" height="16" viewBox="0 0 16 16" ><rect x=".7" y=".7" width="14.600" height="12.600" fill="#fff" stroke="#000" stroke-width="1.400"/><rect x="1.400" y="1.400" width="13.200" height="2.400" fill="#ac44fa"/></svg>
<div class="a" style="left:351px;top:1007px;width:150px;height:24px;background:linear-gradient(#c8c8c8,#d4d4d4)"></div>
<svg style="left:354px;top:1012px" width="16" height="16" viewBox="0 0 16 16" ><path d="M3.5 1h4l1 1.2h6.8V9H3.5z" fill="#4f8fdc" stroke="#2460ad" stroke-width=".8"/><rect x="4.5" y="3.2" width="10" height="5" fill="#e9f1fb"/><path d="M.7 4.5h4l1 1.2h6.8v9.6H.7z" fill="#fff" stroke="#444" stroke-width="1"/><path d="M1.2 5h3.2l1 1.2h6.6V8H1.2z" fill="#4f8fdc"/><path d="M3 10h7.5M3 12h7.5" stroke="#9a9a9a" stroke-width="1"/><path d="M3.5 15.3v-1.6h6v1.6" fill="#fff" stroke="#444" stroke-width=".9"/></svg>
<div class="t " style="left:376px;top:1012px;letter-spacing:0">Competitor Categories</div>
<div class="a" style="left:501px;top:1009px;width:1px;height:21px;background:#c8c8c8"></div>
<svg style="left:507px;top:1012px" width="16" height="16" viewBox="0 0 16 16" ><path d="M3.500 1h4l1 1.200h6.800V9H3.500z" fill="#4f8fdc" stroke="#2460ad" stroke-width=".8"/><path d="M.7 4.500h4l1 1.200h6.800v9.600H.7z" fill="#fff" stroke="#444" stroke-width="1"/><path d="M1.200 5h3.200l1 1.200h6.600V8H1.200z" fill="#4f8fdc"/><path d="M3 10h5M3 12h4" stroke="#9a9a9a" stroke-width="1"/><rect x="9.500" y="8.500" width="5.500" height="5" rx="1" fill="#f0b020" stroke="#7a5200" stroke-width=".8"/><path d="M11 13.500v2.300l1.300-1 1.300 1v-2.300" fill="#333"/></svg>
<div class="t " style="left:530px;top:1012px;letter-spacing:-0.36px">Officials Categories, Coach, Referee, Press</div>
<div class="a" style="left:757px;top:1009px;width:1px;height:21px;background:#c0c0c0"></div>
<svg style="left:762px;top:1012px" width="16" height="16" viewBox="0 0 16 16" ><path d="M1.500 3v10c0 1.400 2.900 2.300 6.500 2.300s6.500-.9 6.500-2.300V3" fill="#e4e6ea" stroke="#70747c" stroke-width="1"/><ellipse cx="8" cy="3" rx="6.500" ry="2.200" fill="#f6f7f9" stroke="#70747c" stroke-width="1"/><path d="M1.500 6.500c0 1.400 2.900 2.300 6.500 2.300s6.500-.9 6.500-2.300M1.500 10c0 1.400 2.900 2.300 6.500 2.300s6.500-.9 6.500-2.300" fill="none" stroke="#70747c" stroke-width="1"/></svg>
<div class="t " style="left:785px;top:1012px;">Welcome</div>
<div class="a" style="left:841px;top:1009px;width:1px;height:21px;background:#c0c0c0"></div>
<div class="a" style="left:0px;top:1039px;width:1287px;height:137px;border:1px solid #959595;box-shadow:1px 1px 2.5px rgba(0,0,0,.5);background:#f0f0f0"></div>
<div class="a" style="left:1px;top:1040px;width:1285px;height:22px;background:linear-gradient(90deg,#fff 0%,#fff 25%,#f5f5f5 60%,#f3f3f3 100%)"></div>
<svg style="left:2px;top:1044px" width="16" height="14" viewBox="0 0 16 16" ><rect x=".3" y="1.500" width="15.400" height="13" rx="1" fill="#1c2028" stroke="#4a6a9c" stroke-width=".8"/><rect x=".8" y="2" width="14.400" height="1.400" fill="#6a8cc4"/><path d="M3 6.500l2 1.500-2 1.500" stroke="#fff" stroke-width="1" fill="none"/><rect x="13" y="2.200" width="1.500" height="1" fill="#e04040"/></svg>
<div class="t " style="left:23px;top:1043px;">Message Console</div>
<svg style="left:1243px;top:1043px" width="16" height="16" viewBox="0 0 16 16" ><path d="M3 4.500h10l-.9 10.800H3.900z" fill="#c8ccd2" stroke="#666" stroke-width="1"/><rect x="1.800" y="2.500" width="12.400" height="2" rx=".6" fill="#aeb4bc" stroke="#666" stroke-width=".8"/><rect x="6" y=".8" width="4" height="1.700" fill="#aeb4bc" stroke="#666" stroke-width=".7"/><path d="M5.800 6.500v7M8 6.500v7M10.200 6.500v7" stroke="#777" stroke-width=".9"/></svg>
<svg style="left:1265px;top:1044px" width="16" height="16" viewBox="0 0 16 16" ><rect x=".7" y=".7" width="14.600" height="12.600" fill="#fff" stroke="#000" stroke-width="1.400"/><rect x="1.400" y="1.400" width="13.200" height="2.400" fill="#ac44fa"/></svg>
<div class="a" style="left:3px;top:1064px;width:1280px;height:108px;border:1px solid #a8a8a8;background:#f2f2f2"></div>
<div class="a" style="left:0px;top:1177px;width:1720px;height:22px;background:linear-gradient(#cfcfd3 0,#dcdce0 14%,#e1e1e5 50%,#d6d6da 82%,#c6c6ca 100%)"></div>
<div class="a" style="left:0px;top:1198.5px;width:1720px;height:2px;background:#fcfcfc"></div>
<div class="t b" style="left:5px;top:1179.5px;font-size:10.5px;letter-spacing:-0.08px">2024-07-14 18:10:15:617 [INFO] Messages found 0</div>
<svg style="left:1706px;top:1185px" width="14" height="14" viewBox="0 0 14 14"><g fill="#fff" transform="translate(1,1)"><rect x="10" y="2" width="2" height="2"/><rect x="6" y="6" width="2" height="2"/><rect x="10" y="6" width="2" height="2"/><rect x="2" y="10" width="2" height="2"/><rect x="6" y="10" width="2" height="2"/><rect x="10" y="10" width="2" height="2"/></g><g fill="#a8a8a8"><rect x="10" y="2" width="2" height="2"/><rect x="6" y="6" width="2" height="2"/><rect x="10" y="6" width="2" height="2"/><rect x="2" y="10" width="2" height="2"/><rect x="6" y="10" width="2" height="2"/><rect x="10" y="10" width="2" height="2"/></g></svg>
<div class="a" style="left:1292px;top:28px;width:427px;height:1149px;border:1px solid #959595;box-shadow:1px 1px 2.5px rgba(0,0,0,.5);background:#f0f0f0"></div>
<div class="a" style="left:1293px;top:29px;width:424px;height:22px;background:linear-gradient(90deg,#fff 0%,#fff 25%,#f5f5f5 60%,#f3f3f3 100%)"></div>
<svg style="left:1294px;top:33px" width="16" height="16" viewBox="0 0 16 16" ><rect x=".5" y="3.500" width="14.500" height="12" fill="#fff" stroke="#8a8a8a" stroke-width="1"/><path d="M.5 7.500h14.500M.5 11.500h14.500M5.300 3.500v12M10.100 7.500v8" stroke="#b4b4b4" stroke-width=".9"/><rect x="1" y="4" width="4" height="3.200" fill="#3c78d8"/><rect x="6.200" y=".5" width="9.300" height="9.300" rx="2" fill="#2cb02c" stroke="#0e6e0e" stroke-width=".9"/><rect x="8" y="2.300" width="5.700" height="5.700" fill="#f4fff4"/><path d="M8.900 4.900l1.600 1.800 2.800-3.700" fill="none" stroke="#0e5e0e" stroke-width="1.400"/></svg>
<div class="t " style="left:1315px;top:32px;letter-spacing:-0.08px">Main data / Entries</div>
<svg style="left:1675px;top:33px" width="16" height="16" viewBox="0 0 16 16" ><rect x=".7" y=".7" width="14.600" height="12.600" fill="#fff" stroke="#000" stroke-width="1.400"/><rect x="1.400" y="1.400" width="13.200" height="2.400" fill="#ac44fa"/></svg>
<svg style="left:1697px;top:33px" width="16" height="16" viewBox="0 0 16 16" ><path d="M3.500 2.700l8 8M11.500 2.700l-8 8" stroke="#e81818" stroke-width="2" fill="none"/></svg>
<div class="a" style="left:1295px;top:53px;width:420px;height:1119px;border:1px solid #a8a8a8;background:#fff;overflow:hidden">
<div class="a" style="left:408px;top:0;width:10px;height:1117px;background:#f0f0f0"></div><div class="a" style="left:408px;top:0;width:10px;height:1005px;background:#cdcdcd"></div>
</div>
<div class="a" style="left:1306px;top:64px;width:388px;height:25px;background:linear-gradient(90deg,#e6e6ea,#ebebee 50%,#efeff1)"></div>
<div class="a" style="left:1306px;top:64px;width:2px;height:1px;background:#4a78d0"></div>
<div class="a" style="left:1692px;top:64px;width:2px;height:1px;background:#4a78d0"></div>
<div class="t b" style="left:1317px;top:67.5px;letter-spacing:-0.1px">Main data</div>
<svg style="left:1669px;top:68px" width="16" height="16" viewBox="0 0 16 16" ><circle cx="8" cy="8" r="7.400" fill="#dcdcde" stroke="#a4a4a4" stroke-width=".9"/><path d="M4.600 7.500L8 4.300l3.400 3.200M4.600 11.600L8 8.400l3.400 3.200" fill="none" stroke="#1a2a1a" stroke-width="1.150"/></svg>
<div class="a" style="left:1306px;top:89px;width:388px;height:182px;background:#f1f1f1;border:1px solid #c4c4c4;border-top:none;border-left-color:#e4e4e4"></div>
<div class="a" style="left:1306px;top:286px;width:388px;height:25px;background:linear-gradient(90deg,#e6e6ea,#ebebee 50%,#efeff1)"></div>
<div class="a" style="left:1306px;top:286px;width:2px;height:1px;background:#4a78d0"></div>
<div class="a" style="left:1692px;top:286px;width:2px;height:1px;background:#4a78d0"></div>
<svg style="left:1669px;top:290px" width="16" height="16" viewBox="0 0 16 16" ><circle cx="8" cy="8" r="7.400" fill="#dcdcde" stroke="#a4a4a4" stroke-width=".9"/><path d="M4.600 7.500L8 4.300l3.400 3.200M4.600 11.600L8 8.400l3.400 3.200" fill="none" stroke="#1a2a1a" stroke-width="1.150"/></svg>
<div class="a" style="left:1306px;top:311px;width:388px;height:254px;background:#f1f1f1;border:1px solid #c4c4c4;border-top:none;border-left-color:#e4e4e4"></div>
<div class="a" style="left:1306px;top:580px;width:388px;height:25px;background:linear-gradient(90deg,#e6e6ea,#ebebee 50%,#efeff1)"></div>
<div class="a" style="left:1306px;top:580px;width:2px;height:1px;background:#4a78d0"></div>
<div class="a" style="left:1692px;top:580px;width:2px;height:1px;background:#4a78d0"></div>
<svg style="left:1669px;top:584px" width="16" height="16" viewBox="0 0 16 16" ><circle cx="8" cy="8" r="7.400" fill="#dcdcde" stroke="#a4a4a4" stroke-width=".9"/><path d="M4.600 7.500L8 4.300l3.400 3.200M4.600 11.600L8 8.400l3.400 3.200" fill="none" stroke="#1a2a1a" stroke-width="1.150"/></svg>
<div class="a" style="left:1306px;top:605px;width:388px;height:470px;background:#f1f1f1;border:1px solid #c4c4c4;border-top:none;border-left-color:#e4e4e4"></div>
<div class="a" style="left:1296px;top:1080px;width:407px;height:91px;overflow:hidden">
<div class="a" style="left:10px;top:10px;width:388px;height:25px;background:linear-gradient(90deg,#e6e6ea,#ebebee 50%,#efeff1)"></div><div class="a" style="left:10px;top:35px;width:388px;height:80px;background:#f1f1f1;border:1px solid #c4c4c4;border-top:none;border-left-color:#e4e4e4"></div></div>
<div class="a" style="left:1306px;top:1090px;width:2px;height:1px;background:#4a78d0"></div>
<div class="a" style="left:1692px;top:1090px;width:2px;height:1px;background:#4a78d0"></div>
<div class="t b" style="left:1317px;top:1093.5px;letter-spacing:-0.3px">Entries - Chart</div>
<svg style="left:1669px;top:1094px" width="16" height="16" viewBox="0 0 16 16" ><circle cx="8" cy="8" r="7.400" fill="#dcdcde" stroke="#a4a4a4" stroke-width=".9"/><path d="M4.600 7.500L8 4.300l3.400 3.200M4.600 11.600L8 8.400l3.400 3.200" fill="none" stroke="#1a2a1a" stroke-width="1.150"/></svg>
<svg style="left:1319px;top:100px" width="16" height="16" viewBox="0 0 16 16" ><circle cx="7.500" cy="5" r="4.300" fill="#f0c020" stroke="#a87808" stroke-width=".9"/><path d="M3.800 6.500h7.400v2.300H3.800z" fill="#f8e090" stroke="#a87808" stroke-width=".6"/><path d="M1.500 15.500c0-4 2.500-5.500 6-5.500s6 1.500 6 5.500z" fill="#fff" stroke="#333" stroke-width="1"/><path d="M5.500 13.500l1 1.500M9.500 13.500l-1 1.500M3.500 12.800v2.700M11.500 12.800v2.700" stroke="#222" stroke-width="1.100"/></svg>
<div class="t " style="left:1338px;top:98.5px;letter-spacing:0.1px">Competitors</div>
<div class="t" style="right:223px;top:226px">Countries</div>
<div class="t" style="right:217px;top:519px">Categories</div>
<div class="t" style="right:217px;top:537px">Competitors</div>
<div class="t" style="right:201px;top:633px">Entries by Clubs</div>
<div class="t" style="right:161px;top:741px">Entries (per day) by Club</div>
<div class="t" style="right:205px;top:795px">Officials (per day)</div>
<div class="t" style="right:161px;top:813px">Officials (per day) by Club</div>
<div class="t" style="right:223px;top:921px">Coach per Club</div>
<svg style="left:1319px;top:957px" width="16" height="16" viewBox="0 0 16 16" ><path d="M2 .700h12v10.600l-4 4H2z" fill="#fbfbfb" stroke="#a4a4a4" stroke-width=".9"/><path d="M14 11.300h-4v4z" fill="#d8d8d8" stroke="#a4a4a4" stroke-width=".6"/><path d="M1.600 .300v15.400" stroke="#c4642a" stroke-width="1.300"/><path d="M.600 1.500v14" stroke="#8a4a22" stroke-width=".9" stroke-dasharray=".8 1.200"/><rect x="6" y="4" width="5.500" height="1.300" fill="#4a7ae0"/><rect x="6" y="6.400" width="5.500" height="1.300" fill="#7aa2ec"/></svg>
<div class="t " style="left:1338px;top:956.5px;letter-spacing:-0.1px">Officials per Club</div>
<svg style="left:1319px;top:975px" width="16" height="16" viewBox="0 0 16 16" ><path d="M2 .700h12v10.600l-4 4H2z" fill="#fbfbfb" stroke="#a4a4a4" stroke-width=".9"/><path d="M14 11.300h-4v4z" fill="#d8d8d8" stroke="#a4a4a4" stroke-width=".6"/><path d="M1.600 .300v15.400" stroke="#c4642a" stroke-width="1.300"/><path d="M.600 1.500v14" stroke="#8a4a22" stroke-width=".9" stroke-dasharray=".8 1.200"/><rect x="6" y="4" width="5.500" height="1.300" fill="#4a7ae0"/><rect x="6" y="6.400" width="5.500" height="1.300" fill="#7aa2ec"/></svg>
<div class="t " style="left:1338px;top:974.5px;letter-spacing:-0.1px">Officials by Other Role</div>
<svg style="left:1319px;top:993px" width="16" height="16" viewBox="0 0 16 16" ><path d="M2 .700h12v10.600l-4 4H2z" fill="#fbfbfb" stroke="#a4a4a4" stroke-width=".9"/><path d="M14 11.300h-4v4z" fill="#d8d8d8" stroke="#a4a4a4" stroke-width=".6"/><path d="M1.600 .300v15.400" stroke="#c4642a" stroke-width="1.300"/><path d="M.600 1.500v14" stroke="#8a4a22" stroke-width=".9" stroke-dasharray=".8 1.200"/><rect x="6" y="4" width="5.500" height="1.300" fill="#4a7ae0"/><rect x="6" y="6.400" width="5.500" height="1.300" fill="#7aa2ec"/></svg>
<div class="t " style="left:1338px;top:992.5px;letter-spacing:-0.1px">Entries in Categories - Country</div>
<svg style="left:1319px;top:1011px" width="16" height="16" viewBox="0 0 16 16" ><path d="M2 .700h12v10.600l-4 4H2z" fill="#fbfbfb" stroke="#a4a4a4" stroke-width=".9"/><path d="M14 11.300h-4v4z" fill="#d8d8d8" stroke="#a4a4a4" stroke-width=".6"/><path d="M1.600 .300v15.400" stroke="#c4642a" stroke-width="1.300"/><path d="M.600 1.500v14" stroke="#8a4a22" stroke-width=".9" stroke-dasharray=".8 1.200"/><rect x="6" y="4" width="5.500" height="1.300" fill="#4a7ae0"/><rect x="6" y="6.400" width="5.500" height="1.300" fill="#7aa2ec"/></svg>
<div class="t " style="left:1338px;top:1010.5px;letter-spacing:-0.1px">Entries in Categories</div>
<svg style="left:1319px;top:1029px" width="16" height="16" viewBox="0 0 16 16" ><path d="M2 .700h12v10.600l-4 4H2z" fill="#fbfbfb" stroke="#a4a4a4" stroke-width=".9"/><path d="M14 11.300h-4v4z" fill="#d8d8d8" stroke="#a4a4a4" stroke-width=".6"/><path d="M1.600 .300v15.400" stroke="#c4642a" stroke-width="1.300"/><path d="M.600 1.500v14" stroke="#8a4a22" stroke-width=".9" stroke-dasharray=".8 1.200"/><rect x="6" y="4" width="5.500" height="1.300" fill="#4a7ae0"/><rect x="6" y="6.400" width="5.500" height="1.300" fill="#7aa2ec"/></svg>
<div class="t " style="left:1338px;top:1028.5px;letter-spacing:-0.1px">Entries in Categories 1 Athlete</div>
<svg style="left:1319px;top:1047px" width="16" height="16" viewBox="0 0 16 16" ><path d="M2 .700h12v10.600l-4 4H2z" fill="#fbfbfb" stroke="#a4a4a4" stroke-width=".9"/><path d="M14 11.300h-4v4z" fill="#d8d8d8" stroke="#a4a4a4" stroke-width=".6"/><path d="M1.600 .300v15.400" stroke="#c4642a" stroke-width="1.300"/><path d="M.600 1.500v14" stroke="#8a4a22" stroke-width=".9" stroke-dasharray=".8 1.200"/><rect x="6" y="4" width="5.500" height="1.300" fill="#4a7ae0"/><rect x="6" y="6.400" width="5.500" height="1.300" fill="#7aa2ec"/></svg>
<div class="t " style="left:1338px;top:1046.5px;letter-spacing:-0.1px">Entries in Categories - Weigh-In</div>
<svg style="left:1318px;top:1125px" width="16" height="16" viewBox="0 0 16 16" ><rect x=".7" y="6.700" width="4.600" height="8.600" fill="#e85050" stroke="#b02828" stroke-width=".8"/><rect x="5.700" y="1.200" width="4.600" height="14.100" fill="#4a86d8" stroke="#2458a8" stroke-width=".8"/><rect x="10.700" y="9.700" width="4.600" height="5.600" fill="#58b058" stroke="#2f7a2f" stroke-width=".8"/></svg>
<div class="t " style="left:1338px;top:1124.5px;">Clubs and entries</div>
<svg style="left:1318px;top:1143px" width="16" height="16" viewBox="0 0 16 16" ><circle cx="8" cy="8" r="7" fill="#58b058" stroke="#2f7a2f" stroke-width=".8"/><path d="M8 8L13 3.100A7 7 0 0 1 9.500 14.800z" fill="#4a86d8" stroke="#2458a8" stroke-width=".6"/><path d="M8 8L9.500 14.800A7 7 0 0 1 1.200 9.500z" fill="#e85050" stroke="#b02828" stroke-width=".6"/><path d="M3.500 5.500l5-3.500" stroke="#fff" stroke-width="1.200"/></svg>
<div class="t " style="left:1338px;top:1142.5px;">Clubs and entries</div>
<div class="a" style="left:1310px;top:1160px;width:380px;height:11px;overflow:hidden"><svg style="left:8px;top:1px" width="16" height="16" viewBox="0 0 16 16"><rect x=".7" y="6.700" width="4.600" height="8.600" fill="#e85050" stroke="#b02828" stroke-width=".8"/><rect x="5.700" y="1.200" width="4.600" height="14.100" fill="#4a86d8" stroke="#2458a8" stroke-width=".8"/><rect x="10.700" y="9.700" width="4.600" height="5.600" fill="#58b058" stroke="#2f7a2f" stroke-width=".8"/></svg><div class="t" style="left:28px;top:0.500px">States / Regions and entries</div></div>
<div class="a" style="left:106px;top:118px;width:1388px;height:851px;border-radius:8px;background:#f2f2f2;box-shadow:0 0 0 1px rgba(0,0,0,.22),0 20px 42px rgba(0,0,0,.30),0 1px 16px rgba(0,0,0,.17)"></div>
<svg style="left:114px;top:124px" width="16" height="16" viewBox="0 0 16 16" ><rect x="0" y="0" width="16" height="8" fill="#e6141e"/><rect x="0" y="8" width="16" height="8" fill="#1e50c8"/><path d="M6.200 5h9l-.9 1.800H8.300l-.4.9h5.500l-1.600 3H2.400l.9-1.800h6l.4-.9H4.300z" fill="#dcdcdc" stroke="#6a6a6a" stroke-width=".45"/><path d="M3 8.600h7.500" stroke="#9a6a3a" stroke-width=".5" opacity=".7"/></svg>
<div class="t " style="left:138px;top:124px;">Weight / size control</div>
<svg style="left:1370px;top:122px" width="116" height="20" viewBox="0 0 116 20"><g fill="none" stroke="#1a1a1a" stroke-width="1.100"><path d="M9 9.500h10"/><rect x="53.500" y="5.500" width="9" height="9" rx="1.500"/><path d="M97 4.500l10 10M107 4.500l-10 10"/></g></svg>
<div class="t" style="left:106.5px;top:152px"><b style="letter-spacing:-0.1px">Weight / size control</b>Filter:</div>
<div class="inp" style="left:257px;top:150px;width:356px;height:21px;"></div>
<div class="inp" style="left:622px;top:150px;width:356px;height:21px;"></div>
<div class="inp" style="left:987px;top:150px;width:356px;height:21px;"></div>
<div class="btn" style="left:1352px;top:149px;width:22px;height:22px;"></div>
<svg style="left:1355px;top:152px" width="16" height="16" viewBox="0 0 16 16" ><path d="M.8 1.500h13.400L9.500 7.500v6l-3 1.500V7.500z" fill="#8cc0ee" stroke="#2f78c0" stroke-width="1"/><path d="M1.500 2h12" stroke="#d8ecfb" stroke-width="1.200"/><circle cx="12" cy="12" r="3.600" fill="#e83030" stroke="#fff" stroke-width=".6"/><path d="M10 12h4" stroke="#fff" stroke-width="1.400"/></svg>
<svg style="left:1376px;top:152px" width="16" height="16" viewBox="0 0 16 16" ><circle cx="8" cy="4.800" r="4.300" fill="#000"/><path d="M.5 16c0-5 2.500-7 7.500-7s7.500 2 7.500 7z" fill="#000"/></svg>
<div class="cb" style="left:1395px;top:153px;width:14px;height:14px;"></div>
<div class="t " style="left:1413px;top:152.5px;letter-spacing:0">Photo preview</div>
<div class="a" style="left:106px;top:173px;width:1388px;height:708px;border:2px solid #9cc4ed;background:#85afd9"></div>
<div class="a" style="left:109px;top:176px;width:1382px;height:702px;overflow:hidden;background:#fff">
<div class="hd" style="left:0px;width:184px">Category</div><div class="hd" style="left:183px;width:127px">Name</div><div class="hd" style="left:309px;width:125px">Club</div><div class="hd" style="left:433px;width:110px">Nation</div><div class="hd" style="left:542px;width:94px">Weight / kg</div><div class="hd" style="left:635px;width:79px">Size / cm</div><div class="hd" style="left:713px;width:69px">Passed</div><div class="hd" style="left:781px;width:105px">Measurement</div><div class="hd" style="left:885px;width:85px">Comment</div><div class="hd" style="left:969px;width:103px">Entries Status</div><div class="hd" style="left:1071px;width:109px">Medical Check</div><div class="hd" style="left:1179px;width:97px">Min. Weight</div><div class="hd" style="left:1275px;width:98px">Max. Weight</div>
<div class="a" style="left:1372px;top:25px;width:11px;height:680px;background:#f4f4f4"></div><svg style="left:1372px;top:7px" width="11" height="11" viewBox="0 0 11 11"><path d="M.600 .600h8v6.500h-8z" fill="#fff" stroke="#000" stroke-width="1.200"/><path d="M.600 3.200h8M4.600 .600v6.500" stroke="#000" stroke-width="1"/><path d="M3.600 6.300h7.200L7.200 10.300z" fill="#000" stroke="#fff" stroke-width=".5"/></svg>
<div class="row" style="top:25px;width:1372px;background:#2675bf;color:#fff;"><span style="left:1.5px;">Category 1</span><span style="left:185px;">Brown Harry</span><span style="left:311px;">Club 2(CLB2)</span><span style="left:435px;letter-spacing:-0.85px">ENGLAND</span><span style="right:737.5px">0</span><span style="right:658.5px">0</span><span style="right:487.5px">0.0</span><span style="left:970px;width:101px;background:#ff0;padding-left:1px">Pending</span><span style="left:1180.5px;">1.0</span><span style="left:1276.5px;">60.5</span><i class="cb" style="left:741px;top:2px"></i><i class="cb" style="left:1119px;top:2px"></i></div>
<div class="row" style="top:43px;width:1372px;"><span style="left:1.5px;">Category 1</span><span style="left:185px;">Gruber Nele</span><span style="left:311px;">Club 1[2](CLB1[2])</span><span style="left:435px;letter-spacing:-0.85px">AUSTRIA</span><span style="right:737.5px">0</span><span style="right:658.5px">0</span><span style="right:487.5px">0.0</span><span style="left:970px;width:101px;background:#ff0;padding-left:1px">Pending</span><span style="left:1180.5px;">1.0</span><span style="left:1276.5px;">60.5</span><i class="cb" style="left:741px;top:2px"></i><i class="cb" style="left:1119px;top:2px"></i></div>
<div class="row" style="top:61px;width:1372px;"><span style="left:1.5px;">Category 2</span><span style="left:185px;">Davis Emma</span><span style="left:311px;">Club 3(CLB3)</span><span style="left:435px;letter-spacing:-0.85px">UNITED STATES</span><span style="right:737.5px">0</span><span style="right:658.5px">0</span><span style="right:487.5px">0.0</span><span style="left:970px;width:101px;background:#ff0;padding-left:1px">Pending</span><span style="left:1180.5px;">59.5</span><span style="left:1276.5px;">200.0</span><i class="cb" style="left:741px;top:2px"></i><i class="cb" style="left:1119px;top:2px"></i></div>
<div class="row" style="top:79px;width:1372px;"><span style="left:1.5px;">Category 2 +199508 YYYYMM</span><span style="left:185px;">Jones Emily</span><span style="left:311px;">Club 2(CLB2)</span><span style="left:435px;letter-spacing:-0.85px">ENGLAND</span><span style="right:737.5px">0</span><span style="right:658.5px">0</span><span style="right:487.5px">0.0</span><span style="left:970px;width:101px;background:#ff0;padding-left:1px">Pending</span><span style="left:1180.5px;">0.0</span><span style="left:1276.5px;">0.0</span><i class="cb" style="left:741px;top:2px"></i><i class="cb" style="left:1119px;top:2px"></i></div>
<div class="row" style="top:97px;width:1372px;"><span style="left:1.5px;">Category 2 -199508 YYYYMM</span><span style="left:185px;">Klein Leon</span><span style="left:311px;">Club 1[2](CLB1[2])</span><span style="left:435px;letter-spacing:-0.85px">AUSTRIA</span><span style="right:737.5px">0</span><span style="right:658.5px">0</span><span style="right:487.5px">0.0</span><span style="left:970px;width:101px;background:#ff0;padding-left:1px">Pending</span><span style="left:1180.5px;">0.0</span><span style="left:1276.5px;">0.0</span><i class="cb" style="left:741px;top:2px"></i><i class="cb" style="left:1119px;top:2px"></i></div>
<div class="row" style="top:115px;width:1372px;"><span style="left:1.5px;">Category 6 - female</span><span style="left:185px;">Garcia Abigail</span><span style="left:311px;">Club 3(CLB3)</span><span style="left:435px;letter-spacing:-0.85px">UNITED STATES</span><span style="right:737.5px">0</span><span style="right:658.5px">0</span><span style="right:487.5px">0.0</span><span style="left:970px;width:101px;background:#ff0;padding-left:1px">Pending</span><span style="left:1180.5px;">0.0</span><span style="left:1276.5px;">0.0</span><i class="cb" style="left:741px;top:2px"></i><i class="cb" style="left:1119px;top:2px"></i></div>
<div class="row" style="top:133px;width:1372px;"><span style="left:1.5px;">Category 6 - female</span><span style="left:185px;">McConner Sara</span><span style="left:311px;">Best Club(MYC)</span><span style="left:435px;letter-spacing:-0.85px">UNITED STATES</span><span style="right:737.5px">0</span><span style="right:658.5px">0</span><span style="right:487.5px">0.0</span><span style="left:970px;width:101px;background:#ff0;padding-left:1px">Pending</span><span style="left:1180.5px;">0.0</span><span style="left:1276.5px;">0.0</span><i class="cb" style="left:741px;top:2px"></i><i class="cb" style="left:1119px;top:2px"></i></div>
<div class="row" style="top:151px;width:1372px;"><span style="left:1.5px;">Category 6 - female</span><span style="left:185px;">Schreiber Christine</span><span style="left:311px;">Club 1[2](CLB1[2])</span><span style="left:435px;letter-spacing:-0.85px">AUSTRIA</span><span style="right:737.5px">0</span><span style="right:658.5px">0</span><span style="right:487.5px">0.0</span><span style="left:970px;width:101px;background:#ff0;padding-left:1px">Pending</span><span style="left:1180.5px;">0.0</span><span style="left:1276.5px;">0.0</span><i class="cb" style="left:741px;top:2px"></i><i class="cb" style="left:1119px;top:2px"></i></div>
<div class="row" style="top:169px;width:1372px;"><span style="left:1.5px;">Category 6 - female</span><span style="left:185px;">Williams Jessica</span><span style="left:311px;">Club 2(CLB2)</span><span style="left:435px;letter-spacing:-0.85px">ENGLAND</span><span style="right:737.5px">0</span><span style="right:658.5px">0</span><span style="right:487.5px">0.0</span><span style="left:970px;width:101px;background:#ff0;padding-left:1px">Pending</span><span style="left:1180.5px;">0.0</span><span style="left:1276.5px;">0.0</span><i class="cb" style="left:741px;top:2px"></i><i class="cb" style="left:1119px;top:2px"></i></div>
<div class="row" style="top:187px;width:1372px;"><span style="left:1.5px;">Category 6 - male</span><span style="left:185px;">Mayer Andreas</span><span style="left:311px;">Club 1[2](CLB1[2])</span><span style="left:435px;letter-spacing:-0.85px">AUSTRIA</span><span style="right:737.5px">0</span><span style="right:658.5px">0</span><span style="right:487.5px">0.0</span><span style="left:970px;width:101px;background:#ff0;padding-left:1px">Pending</span><span style="left:1180.5px;">0.0</span><span style="left:1276.5px;">0.0</span><i class="cb" style="left:741px;top:2px"></i><i class="cb" style="left:1119px;top:2px"></i></div>
<div class="row" style="top:205px;width:1372px;"><span style="left:1.5px;">Category 6 - male</span><span style="left:185px;">Smith Jack</span><span style="left:311px;">Club 2(CLB2)</span><span style="left:435px;letter-spacing:-0.85px">ENGLAND</span><span style="right:737.5px">0</span><span style="right:658.5px">0</span><span style="right:487.5px">0.0</span><span style="left:970px;width:101px;background:#ff0;padding-left:1px">Pending</span><span style="left:1180.5px;">0.0</span><span style="left:1276.5px;">0.0</span><i class="cb" style="left:741px;top:2px"></i><i class="cb" style="left:1119px;top:2px"></i></div>
<div class="row" style="top:223px;width:1372px;"><span style="left:1.5px;">Team Category</span><span style="left:185px;">Abe Yuto</span><span style="left:311px;">Club 4(CLB4)</span><span style="left:435px;letter-spacing:-0.85px">JAPAN</span><span style="right:737.5px">0</span><span style="right:658.5px">0</span><span style="right:487.5px">0.0</span><span style="left:970px;width:101px;background:#ff0;padding-left:1px">Pending</span><span style="left:1180.5px;">0.0</span><span style="left:1276.5px;">0.0</span><i class="cb" style="left:741px;top:2px"></i><i class="cb" style="left:1119px;top:2px"></i></div>
<div class="row" style="top:241px;width:1372px;"><span style="left:1.5px;">Team Category</span><span style="left:185px;">Fukui Hina</span><span style="left:311px;">Club 4(CLB4)</span><span style="left:435px;letter-spacing:-0.85px">JAPAN</span><span style="right:737.5px">0</span><span style="right:658.5px">0</span><span style="right:487.5px">0.0</span><span style="left:970px;width:101px;background:#ff0;padding-left:1px">Pending</span><span style="left:1180.5px;">0.0</span><span style="left:1276.5px;">0.0</span><i class="cb" style="left:741px;top:2px"></i><i class="cb" style="left:1119px;top:2px"></i></div>
<div class="row" style="top:259px;width:1372px;"><span style="left:1.5px;">Team Category</span><span style="left:185px;">Hayashi Yuma</span><span style="left:311px;">Club 4(CLB4)</span><span style="left:435px;letter-spacing:-0.85px">JAPAN</span><span style="right:737.5px">0</span><span style="right:658.5px">0</span><span style="right:487.5px">0.0</span><span style="left:970px;width:101px;background:#ff0;padding-left:1px">Pending</span><span style="left:1180.5px;">0.0</span><span style="left:1276.5px;">0.0</span><i class="cb" style="left:741px;top:2px"></i><i class="cb" style="left:1119px;top:2px"></i></div>
</div>
<div class="a" style="left:768px;top:882px;width:64px;height:15px;background:#ff0"></div>
<div class="t c" style="left:768px;top:881px;width:64px;letter-spacing:-0.5px">P: 14 (100%)</div>
<div class="t " style="left:428px;top:906.5px;">14 Records found</div>
<div class="t " style="left:528px;top:906.5px;">/ Rows checked: 0</div>
<div class="cb" style="left:631px;top:909px;width:14px;height:14px;"></div>
<div class="t " style="left:649px;top:906.5px;">Enable change of Entry Status</div>
<div class="cb" style="left:815px;top:909px;width:14px;height:14px;border-color:#cfcfcf;background:#f6f6f6"></div>
<div class="t " style="left:833px;top:906.5px;color:#8e8e8e;letter-spacing:-0.08px">Autom. set entry status on status ok check</div>
<div class="a" style="left:1065px;top:904.5px;width:105px;height:21.5px;border:1px solid #cfcfcf;border-radius:3px;background:#f3f3f3"></div>
<div class="t " style="left:1072px;top:906.5px;color:#8e8e8e">Weighed</div>
<svg style="left:1154px;top:913px" width="9" height="6" viewBox="0 0 9 6"><path d="M0 0h9L4.500 5.500z" fill="#9a9a9a"/></svg>
<div class="btn" style="left:467px;top:940px;width:22px;height:22px;"></div>
<svg style="left:470px;top:943px" width="16" height="16" viewBox="0 0 16 16" ><rect x="1" y="1" width="14" height="14" rx="3" fill="#e8ecf6" stroke="#52629a" stroke-width="1.300"/><path d="M3.300 7.600a4.700 4.700 0 0 1 9.400 0z" fill="#fff" stroke="#52629a" stroke-width="1.100"/><path d="M8 7.200V4.600" stroke="#52629a" stroke-width="1.100"/><path d="M3.200 11.800h9.600" stroke="#52629a" stroke-width="1.200"/><path d="M1.500 8.500v3M14.500 8.500v3" stroke="#fff" stroke-width="1.800"/></svg>
<div class="btn" style="left:498px;top:940px;width:72px;height:22px;"></div>
<svg style="left:513px;top:943px" width="16" height="16" viewBox="0 0 16 16" ><path d="M.7 1.100h8.300l4.500 4.500v10H.7z" fill="#fff" stroke="#4a4a4a" stroke-width="1"/><path d="M9 1.100v4.500h4.500" fill="#ececec" stroke="#4a4a4a" stroke-width=".8"/><path d="M5.500 15.800l1.200-3.600 7.400-7.400 2.400 2.400-7.400 7.400z" fill="#3b7fd9" stroke="#1d4f9c" stroke-width=".7"/><path d="M13.400 5.500l1.300-1.300 2.400 2.400-1.300 1.300z" fill="#e62020"/><path d="M5.500 15.800l1.200-3.600 2.400 2.400z" fill="#f2c879" stroke="#a67a2a" stroke-width=".5"/><path d="M8 12.200l5.800-5.800" stroke="#9cc4f6" stroke-width=".9"/></svg>
<div class="t " style="left:534px;top:942.5px;">Edit</div>
<div class="btn" style="left:579px;top:940px;width:86px;height:22px;"></div>
<svg style="left:592px;top:944px" width="15" height="15" viewBox="0 0 16 16" ><path d="M1.500 7.500V5.800c0-1.100.7-1.800 1.800-1.800h4.900V1.500l4.300 3.400-4.300 3.400V5.900H3.600v1.600z" fill="#b4e6f0" stroke="#1c5c7c" stroke-width="1"/><path d="M14.500 8.500v1.700c0 1.100-.7 1.800-1.800 1.800H7.800v2.500L3.500 11.100l4.300-3.400v2.400h4.600V8.500z" fill="#b4e6f0" stroke="#0c5068" stroke-width="1"/></svg>
<div class="t " style="left:611px;top:942.5px;">Refresh</div>
<div class="btn" style="left:674px;top:940px;width:133px;height:22px;"></div>
<svg style="left:689px;top:943px" width="16" height="16" viewBox="0 0 16 16" ><path d="M2 .7h5.500l2.500 2.500v6H2z" fill="#fff" stroke="#555" stroke-width="1"/><path d="M7.500 .7v2.500H10" fill="#e4e4e4" stroke="#555" stroke-width=".7"/><path d="M2.500 9.500v-5" stroke="#fff" stroke-width="1.500"/><path d="M6 9.300h4.500V6.500l5 4.700-5 4.500v-2.900H6z" fill="#48b428" stroke="#1f6a10" stroke-width=".9"/></svg>
<div class="t " style="left:709px;top:942.5px;">Print / Save as...</div>
<div class="btn" style="left:816px;top:940px;width:131px;height:22px;"></div>
<svg style="left:832px;top:945px" width="13" height="13" viewBox="0 0 16 16" ><path d="M1 1h14v14H1z" fill="#3a4a8c" stroke="#1a2456" stroke-width="1"/><rect x="3.500" y="1.500" width="9" height="6" fill="#f4f4f4"/><path d="M3.500 3h9" stroke="#e03030" stroke-width="1.400"/><rect x="4.500" y="10" width="7" height="5" fill="#c8ccd8"/><rect x="5.500" y="11" width="2" height="3.500" fill="#3a4a8c"/></svg>
<div class="t " style="left:851px;top:942.5px;letter-spacing:-0.45px">Save as CSV file</div>
<div class="btn" style="left:956px;top:940px;width:96px;height:22px;"></div>
<svg style="left:971px;top:944px" width="16" height="16" viewBox="0 0 16 16" ><g transform="rotate(-30 8 8)"><rect x=".5" y="6.500" width="15" height="7" fill="#62b268" stroke="#3c8c46" stroke-width=".8"/><rect x="1" y="3" width="14.500" height="7" fill="#8fd094" stroke="#3c8c46" stroke-width=".8"/><rect x="2.300" y="4.300" width="11.900" height="4.400" fill="none" stroke="#5aa862" stroke-width=".6"/><ellipse cx="8.200" cy="6.500" rx="2.300" ry="1.800" fill="#dff3df" stroke="#5aa862" stroke-width=".5"/></g></svg>
<div class="t " style="left:991px;top:942.5px;">Entry fee</div>
<div class="btn" style="left:1061px;top:940px;width:72px;height:22px;"></div>
<div class="t c" style="left:1061px;top:942.5px;width:72px;">Close</div>
<svg style="left:540px;top:200px" width="260" height="260" viewBox="540 200 260 260"><defs><linearGradient id="ag" gradientUnits="userSpaceOnUse" x1="556" y1="216" x2="566" y2="228"><stop offset="0" stop-color="#ea5858" stop-opacity="0"/><stop offset="1" stop-color="#ea5858" stop-opacity=".72"/></linearGradient></defs><path d="M546.6 209.800L572.500 218.900L550 218.900Z" fill="#fff" opacity=".8"/><path d="M556.500 216L792 309.100L675.100 336.500L649.300 451.500Z" fill="url(#ag)"/></svg>
</body></html>
